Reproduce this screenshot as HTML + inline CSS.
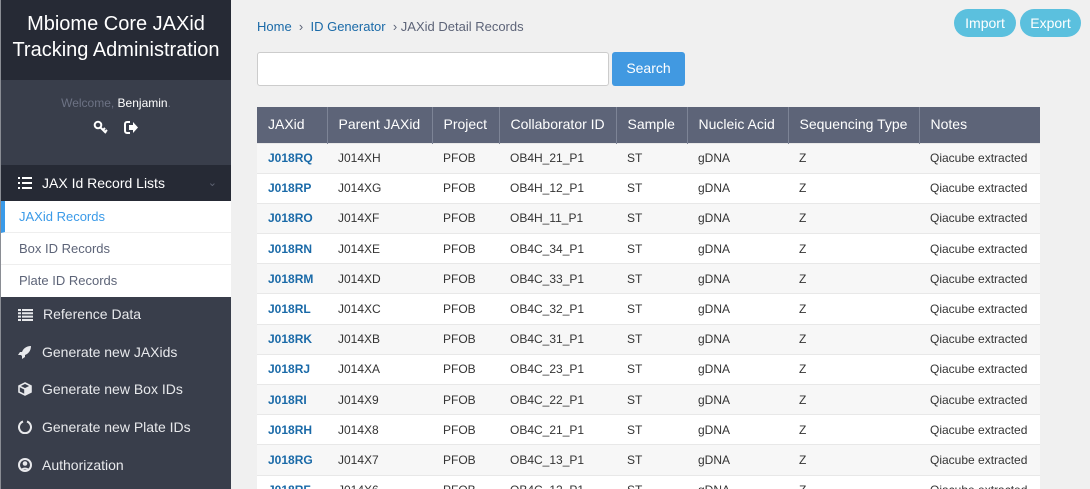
<!DOCTYPE html>
<html style="height:489px;overflow:hidden"><head><meta charset="utf-8"><style>
*{box-sizing:border-box;margin:0;padding:0}
body{width:1090px;height:489px;overflow:hidden;background:#f0f0f0;font-family:"Liberation Sans",sans-serif;position:relative}
.sb{position:absolute;left:0;top:0;width:231px;height:489px;background:#393e4b;border-left:1px solid #8a8d94}
.title{height:80px;background:#262a35;color:#fff;font-size:20px;text-align:center;line-height:26px;padding-top:11px}
.welcome{height:85px;text-align:center;font-size:12px;color:#6c7284;padding-top:16px}
.welcome b{color:#fff;font-weight:normal}
.icons{margin-top:10px;color:#fff;font-size:14px}
.hdr{height:36px;background:#262a35;color:#fff;font-size:14px;line-height:36px;padding-left:17px;position:relative}
.hdr .chev{position:absolute;right:14px;top:0;color:#5e6372;font-size:11px}
.sub{background:#fff}
.sub div{height:32px;line-height:31px;padding-left:18px;font-size:13px;color:#5d6478;border-bottom:1px solid #eee}
.sub div.act{color:#3a9ae8;border-left:4px solid #3a9ae8;padding-left:14px}
.nav div{height:37.7px;line-height:34px;color:#e8e9ec;font-size:14px;padding-left:17px}
.nav svg{vertical-align:-2px;margin-right:10px}
.bc{position:absolute;left:257px;top:19px;font-size:13px;color:#5d6478}
.bc a{color:#1a6aa8;text-decoration:none}
.inp{position:absolute;left:257px;top:52px;width:352px;height:34px;background:#fff;border:1px solid #ccc;border-radius:3px}
.sbtn{position:absolute;left:612px;top:52px;width:73px;height:34px;background:#4199e1;color:#fff;font-size:14px;text-align:center;line-height:33px;border-radius:3px}
.pb{position:absolute;top:9px;height:28px;background:#5bc0de;color:#fff;font-size:14px;line-height:28px;text-align:center;border-radius:14px}
table{position:absolute;left:257px;top:107px;width:783px;border-collapse:collapse;font-size:12px;color:#333}
th{background:#5d6478;color:#fff;font-weight:normal;font-size:14px;height:36px;text-align:left;padding-left:11px;border-left:1px solid #7d8496;padding-bottom:2px}
th:first-child{border-left:none}
td{height:30.2px;padding-left:11px;border-top:1px solid #e8e8e8;white-space:nowrap}
tr:nth-child(even) td{background:#f7f7f7}
tr:nth-child(odd) td{background:#fff}
td:first-child{color:#1a6aa8;font-weight:bold}
</style></head><body>
<div class="sb">
<div class="title">Mbiome Core JAXid<br>Tracking Administration</div>
<div class="welcome">Welcome, <b>Benjamin</b>.
<div class="icons"><svg width="16" height="14" viewBox="0 0 16 14"><circle cx="5" cy="5" r="3.3" fill="none" stroke="#fff" stroke-width="2"/><path d="M7 7l6 6M10 10l2-2M12 12l2-2" stroke="#fff" stroke-width="2"/></svg>&nbsp;&nbsp;&nbsp;&nbsp;<svg width="15" height="13" viewBox="0 0 15 13"><path d="M6 1H3a2 2 0 0 0-2 2v7a2 2 0 0 0 2 2h3" fill="none" stroke="#fff" stroke-width="2"/><path d="M5 4h4V1l5 5.5-5 5.5V9H5z" fill="#fff"/></svg></div></div>
<div class="hdr"><svg width="14" height="12" viewBox="0 0 14 12" style="vertical-align:-1px;margin-right:10px"><path d="M0 1h2M4 1h10M0 6h2M4 6h10M0 11h2M4 11h10" stroke="#fff" stroke-width="2"/></svg>JAX Id Record Lists<span class="chev">&#8964;</span></div>
<div class="sub"><div class="act">JAXid Records</div><div>Box ID Records</div><div style="border:none">Plate ID Records</div></div>
<div class="nav">
<div><svg width="15" height="12" viewBox="0 0 15 12"><path d="M0 1h3M4 1h11M0 4.3h3M4 4.3h11M0 7.6h3M4 7.6h11M0 11h3M4 11h11" stroke="#e8e9ec" stroke-width="2"/></svg>Reference Data</div>
<div><svg width="14" height="14" viewBox="0 0 14 14"><path d="M13 1c-5 0-8 3-9 6L2 7 0 10l3 0 1 1 0 3 3-2 0-2c3-1 6-4 6-9z" fill="#e8e9ec"/></svg>Generate new JAXids</div>
<div><svg width="14" height="14" viewBox="0 0 14 14"><path d="M7 1l6 3v6l-6 3-6-3V4z" fill="none" stroke="#e8e9ec" stroke-width="1.6"/><path d="M1 4l6 3 6-3M7 7v6" stroke="#e8e9ec" stroke-width="1.6" fill="none"/><path d="M7 7v6l6-3V4z" fill="#e8e9ec"/></svg>Generate new Box IDs</div>
<div><svg width="14" height="14" viewBox="0 0 14 14"><path d="M5 1.5A6 6 0 1 0 9 1.5" fill="none" stroke="#e8e9ec" stroke-width="2"/></svg>Generate new Plate IDs</div>
<div><svg width="14" height="14" viewBox="0 0 14 14"><circle cx="7" cy="7" r="6" fill="none" stroke="#e8e9ec" stroke-width="2"/><circle cx="7" cy="5.5" r="2.3" fill="#e8e9ec"/><path d="M3 11.5c1-2.5 7-2.5 8 0" fill="#e8e9ec"/></svg>Authorization</div>
</div>
</div>
<div class="bc"><a>Home</a> &nbsp;›&nbsp; <a>ID Generator</a> &nbsp;› JAXid Detail Records</div>
<div class="inp"></div><div class="sbtn">Search</div>
<div class="pb" style="left:954px;width:62px">Import</div>
<div class="pb" style="left:1020px;width:61px">Export</div>
<table>
<tr><th style="width:70px">JAXid</th><th style="width:105px">Parent JAXid</th><th style="width:67px">Project</th><th style="width:117px">Collaborator ID</th><th style="width:71px">Sample</th><th style="width:101px">Nucleic Acid</th><th style="width:131px">Sequencing Type</th><th>Notes</th></tr>
<tr><td>J018RQ</td><td>J014XH</td><td>PFOB</td><td>OB4H_21_P1</td><td>ST</td><td>gDNA</td><td>Z</td><td>Qiacube extracted</td></tr>
<tr><td>J018RP</td><td>J014XG</td><td>PFOB</td><td>OB4H_12_P1</td><td>ST</td><td>gDNA</td><td>Z</td><td>Qiacube extracted</td></tr>
<tr><td>J018RO</td><td>J014XF</td><td>PFOB</td><td>OB4H_11_P1</td><td>ST</td><td>gDNA</td><td>Z</td><td>Qiacube extracted</td></tr>
<tr><td>J018RN</td><td>J014XE</td><td>PFOB</td><td>OB4C_34_P1</td><td>ST</td><td>gDNA</td><td>Z</td><td>Qiacube extracted</td></tr>
<tr><td>J018RM</td><td>J014XD</td><td>PFOB</td><td>OB4C_33_P1</td><td>ST</td><td>gDNA</td><td>Z</td><td>Qiacube extracted</td></tr>
<tr><td>J018RL</td><td>J014XC</td><td>PFOB</td><td>OB4C_32_P1</td><td>ST</td><td>gDNA</td><td>Z</td><td>Qiacube extracted</td></tr>
<tr><td>J018RK</td><td>J014XB</td><td>PFOB</td><td>OB4C_31_P1</td><td>ST</td><td>gDNA</td><td>Z</td><td>Qiacube extracted</td></tr>
<tr><td>J018RJ</td><td>J014XA</td><td>PFOB</td><td>OB4C_23_P1</td><td>ST</td><td>gDNA</td><td>Z</td><td>Qiacube extracted</td></tr>
<tr><td>J018RI</td><td>J014X9</td><td>PFOB</td><td>OB4C_22_P1</td><td>ST</td><td>gDNA</td><td>Z</td><td>Qiacube extracted</td></tr>
<tr><td>J018RH</td><td>J014X8</td><td>PFOB</td><td>OB4C_21_P1</td><td>ST</td><td>gDNA</td><td>Z</td><td>Qiacube extracted</td></tr>
<tr><td>J018RG</td><td>J014X7</td><td>PFOB</td><td>OB4C_13_P1</td><td>ST</td><td>gDNA</td><td>Z</td><td>Qiacube extracted</td></tr>
<tr><td>J018RF</td><td>J014X6</td><td>PFOB</td><td>OB4C_12_P1</td><td>ST</td><td>gDNA</td><td>Z</td><td>Qiacube extracted</td></tr>
</table>
</body></html>
